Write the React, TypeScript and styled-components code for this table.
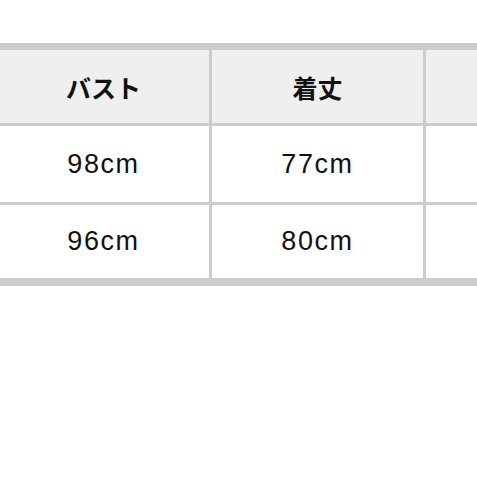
import React from 'react'
import styled, { createGlobalStyle } from 'styled-components'

const HEADERS = ['バスト', '着丈', '']
const ROWS = [
  ['98cm', '77cm', ''],
  ['96cm', '80cm', '']
]

const GlobalStyle = createGlobalStyle`
  html, body {
    margin: 0;
    padding: 0;
    background: #ffffff;
    overflow: hidden;
  }
`

export default function App() {
  return (
    <>
      <GlobalStyle />
      <Page>
        <SizeTable>
          <thead>
            <tr>
              {HEADERS.map((h, idx) => (
                <HeadCell key={idx}>{h}</HeadCell>
              ))}
            </tr>
          </thead>
          <tbody>
            {ROWS.map((row, rIdx) => (
              <tr key={rIdx}>
                {row.map((cell, cIdx) => (
                  <BodyCell key={cIdx} last={rIdx === ROWS.length - 1}>
                    {cell}
                  </BodyCell>
                ))}
              </tr>
            ))}
          </tbody>
        </SizeTable>
      </Page>
    </>
  )
}

const Page = styled.div`
  width: 477px;
  height: 477px;
  padding-top: 43px;
  box-sizing: border-box;
  overflow: hidden;
  background: #ffffff;
`

const SizeTable = styled.table`
  margin-left: -2px;
  border-collapse: separate;
  border-spacing: 0;
  table-layout: fixed;
  border-top: 7px solid #cccccc;
  border-bottom: 8px solid #cccccc;
  font-family: "Liberation Sans", "Noto Sans CJK JP", sans-serif;
  color: #111111;
`

const HeadCell = styled.th`
  width: 211px;
  min-width: 211px;
  height: 73px;
  padding: 0;
  background: #efefef;
  border-right: 3px solid #cccccc;
  border-bottom: 3px solid #cccccc;
  font-family: "Noto Sans CJK JP", sans-serif;
  font-size: 25px;
  font-weight: 700;
  text-align: center;
  vertical-align: middle;
`

const BodyCell = styled.td<{ last?: boolean }>`
  width: 211px;
  min-width: 211px;
  height: ${p => (p.last ? '73px' : '76px')};
  padding: 0;
  background: #ffffff;
  border-right: 3px solid #cccccc;
  border-bottom: ${p => (p.last ? 'none' : '3px solid #cccccc')};
  font-size: 27px;
  letter-spacing: 1.6px;
  text-align: center;
  vertical-align: middle;
`
